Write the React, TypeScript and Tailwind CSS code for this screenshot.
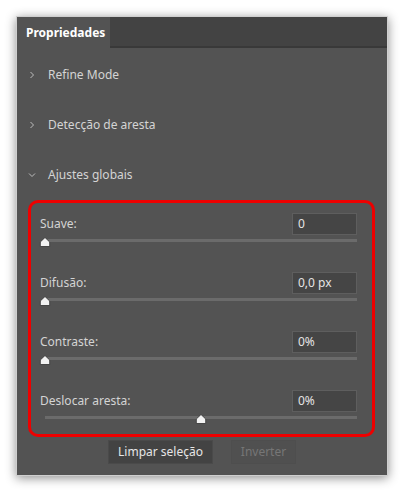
import React from "react"

const font = { fontFamily: '"Noto Sans", "Open Sans", sans-serif' }

function Chevron({ open }: { open?: boolean }) {
  return (
    <svg width="8" height="8" viewBox="0 0 8 8" className="shrink-0">
      {open ? (
        <path d="M1 2.5 L4 5.5 L7 2.5" fill="none" stroke="#bdbdbd" strokeWidth="1" />
      ) : (
        <path d="M2.5 1 L5.5 4 L2.5 7" fill="none" stroke="#bdbdbd" strokeWidth="1" />
      )}
    </svg>
  )
}

function Section({ title, open }: { title: string; open?: boolean }) {
  return (
    <div className="flex h-[50px] items-center gap-[12px] pl-[11px] text-[12px] text-[#d4d4d4]">
      <Chevron open={open} />
      <span className="whitespace-nowrap">{title}</span>
    </div>
  )
}

function Thumb() {
  return (
    <svg width="11" height="10" viewBox="0 0 11 10">
      <path d="M5.5 0.5 L10.2 5 L10.2 9.5 L0.8 9.5 L0.8 5 Z" fill="#f2f2f2" stroke="#2e2e2e" strokeWidth="0.8" />
    </svg>
  )
}

function SliderRow({
  label,
  value,
  pos,
  last,
}: {
  label: string
  value: string
  pos: number
  last?: boolean
}) {
  return (
    <div className={last ? "" : "mb-[25px]"}>
      <div className="flex h-[22px] items-center justify-between">
        <span className="text-[12px] text-[#d4d4d4]">{label}</span>
        <div className="flex h-[22px] w-[65px] items-center border border-[#5e5e5e] bg-[#454545] px-[5px] text-[12px] text-[#e4e4e4]">
          {value}
        </div>
      </div>
      <div className="relative ml-[5px] h-[12px]">
        <div className="absolute left-0 right-0 top-[4px] h-[3px] bg-[#6b6b6b]" />
        <div
          className="absolute top-[2px] -translate-x-1/2"
          style={{ left: `${pos}%` }}
        >
          <Thumb />
        </div>
      </div>
    </div>
  )
}

export default function App() {
  return (
    <div className="h-[493px] w-[405px] bg-white p-[16px]" style={font}>
      <div className="flex h-[460px] w-[372px] flex-col border border-[#cfcfcf] bg-[#535353] shadow-[0_2px_10px_rgba(0,0,0,0.45)]">
        <div className="flex h-[31px] shrink-0 bg-[#434343]">
          <div className="flex w-[93px] items-center bg-[#535353] pl-[9px] text-[12px] font-bold text-white">
            Propriedades
          </div>
          <div className="flex-1 border-b-[2px] border-[#393939]" />
        </div>

        <div className="pt-[2px]">
          <Section title="Refine Mode" />
          <Section title="Detecção de aresta" />
          <Section title="Ajustes globais" open />
        </div>

        <div className="ml-[11px] mr-[12px] rounded-[10px] border-[3px] border-[#ee0000] pb-[10px] pl-[9px] pr-[15px] pt-[10px]">
          <SliderRow label="Suave:" value="0" pos={0} />
          <SliderRow label="Difusão:" value="0,0 px" pos={0} />
          <SliderRow label="Contraste:" value="0%" pos={0} />
          <SliderRow label="Deslocar aresta:" value="0%" pos={50} last />
        </div>

        <div className="mt-[3px] flex justify-center gap-[18px]">
          <div className="flex h-[24px] w-[105px] items-center justify-center border border-[#4a4a4a] bg-[#434343] text-[12px] text-[#e6e6e6]">
            Limpar seleção
          </div>
          <div className="flex h-[24px] w-[65px] items-center justify-center border border-[#4e4e4e] bg-[#505050] text-[12px] text-[#767676]">
            Inverter
          </div>
        </div>
      </div>
    </div>
  )
}
